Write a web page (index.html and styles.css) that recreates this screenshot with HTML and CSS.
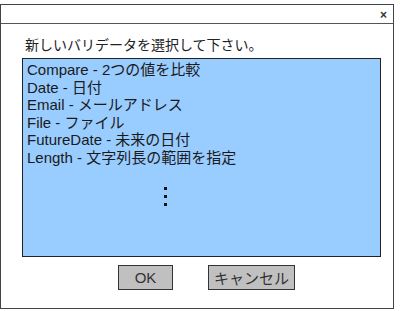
FILE: index.html
```html
<!DOCTYPE html>
<html lang="ja">
<head>
  <meta charset="UTF-8">
  <title>バリデータの選択</title>
  <link rel="stylesheet" href="styles.css">
</head>
<body>
  <div class="window">
    <div class="titlebar">
      <span class="close">×</span>
    </div>
    <div class="content">
      <p class="label">新しいバリデータを選択して下さい。</p>
      <div class="list">
        <div class="item">Compare - 2つの値を比較</div>
        <div class="item">Date - 日付</div>
        <div class="item">Email - メールアドレス</div>
        <div class="item">File - ファイル</div>
        <div class="item">FutureDate - 未来の日付</div>
        <div class="item">Length - 文字列長の範囲を指定</div>
        <div class="more">
          <span></span>
          <span></span>
          <span></span>
        </div>
      </div>
      <div class="buttons">
        <button class="btn btn-ok">OK</button>
        <button class="btn btn-cancel">キャンセル</button>
      </div>
    </div>
  </div>
</body>
</html>
```

FILE: styles.css
```css
body {
  margin: 0;
  padding: 0;
  background: #ffffff;
  font-family: "Liberation Sans", Arial, "Noto Sans CJK JP", sans-serif;
  color: #222;
}

.window {
  margin-top: 4px;
  width: 392px;
  height: 303px;
  border: 1px solid #444;
  background: #fff;
}

.titlebar {
  height: 18px;
  border-bottom: 1px solid #555;
  display: flex;
  justify-content: flex-end;
  align-items: center;
}

.close {
  font-size: 12px;
  font-weight: bold;
  line-height: 12px;
  margin-right: 6px;
  margin-top: 1px;
  color: #333;
}

.content {
  padding-left: 21px;
}

.label {
  margin: 0;
  padding: 12px 0 0 3px;
  font-size: 14px;
  line-height: 18px;
  height: 18px;
}

.list {
  margin-top: 4px;
  width: 357px;
  height: 195px;
  border: 1px solid #222;
  background: #99ccff;
  padding-top: 2px;
  box-sizing: content-box;
}

.item {
  padding-left: 4px;
  font-size: 15px;
  line-height: 17.6px;
  height: 17.6px;
  color: #1a1a1a;
  white-space: nowrap;
}

.more {
  margin-top: 20px;
  margin-left: 141px;
  display: flex;
  flex-direction: column;
  gap: 5px;
}

.more span {
  width: 3px;
  height: 3px;
  background: #111;
}

.buttons {
  margin-top: 8px;
  padding-left: 96px;
  display: flex;
  gap: 35px;
}

.btn {
  height: 25px;
  padding: 0;
  border: 1px solid #333;
  background: #c0c0c0;
  font-family: "Liberation Sans", Arial, "Noto Sans CJK JP", sans-serif;
  font-size: 15px;
  color: #333;
  box-sizing: border-box;
}

.btn-ok {
  width: 55px;
}

.btn-cancel {
  width: 87px;
}
```
